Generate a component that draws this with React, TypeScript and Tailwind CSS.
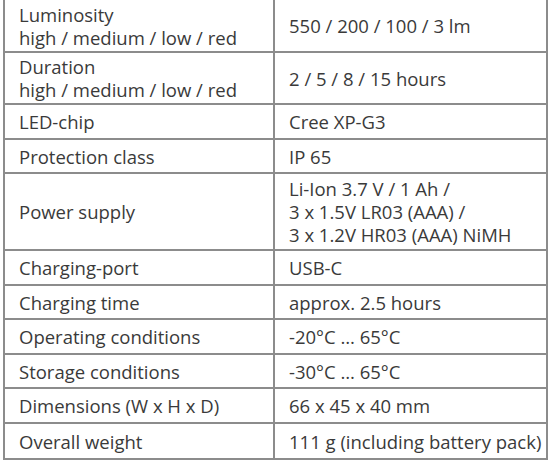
import React from "react";

type Row = { label: string[]; value: string[]; h: string };

const rows: Row[] = [
  { label: ["Luminosity", "high / medium / low / red"], value: ["550 / 200 / 100 / 3 lm"], h: "h-[53px]" },
  { label: ["Duration", "high / medium / low / red"], value: ["2 / 5 / 8 / 15 hours"], h: "h-[52px]" },
  { label: ["LED-chip"], value: ["Cree XP-G3"], h: "h-[35px]" },
  { label: ["Protection class"], value: ["IP 65"], h: "h-[34px]" },
  { label: ["Power supply"], value: ["Li-Ion 3.7 V / 1 Ah /", "3 x 1.5V LR03 (AAA) /", "3 x 1.2V HR03 (AAA) NiMH"], h: "h-[77px]" },
  { label: ["Charging-port"], value: ["USB-C"], h: "h-[35px]" },
  { label: ["Charging time"], value: ["approx. 2.5 hours"], h: "h-[34px]" },
  { label: ["Operating conditions"], value: ["-20°C … 65°C"], h: "h-[35px]" },
  { label: ["Storage conditions"], value: ["-30°C … 65°C"], h: "h-[34px]" },
  { label: ["Dimensions (W x H x D)"], value: ["66 x 45 x 40 mm"], h: "h-[35px]" },
  { label: ["Overall weight"], value: ["111 g (including battery pack)"], h: "h-[34px]" },
];

export default function App() {
  return (
    <div
      className="w-[550px] h-[462px] bg-white overflow-hidden text-[#3a3a3a]"
      style={{ fontFamily: '"Open Sans", "Noto Sans", sans-serif' }}
    >
      <div className="ml-[3px] w-[545px] border-x-2 border-b-2 border-[#8c8c8c]">
        {rows.map((r, i) => (
          <div
            key={i}
            className={`grid grid-cols-[270px_1fr] ${r.h} ${i < rows.length - 1 ? "border-b-2 border-[#8c8c8c]" : ""}`}
          >
            <div className="flex flex-col justify-center pl-[14px] border-r-2 border-[#8c8c8c] text-[18.5px] leading-[23px] whitespace-nowrap">
              {r.label.map((t, j) => (
                <div key={j}>{t}</div>
              ))}
            </div>
            <div className="flex flex-col justify-center pl-[14px] text-[18.5px] leading-[23px] whitespace-nowrap">
              {r.value.map((t, j) => (
                <div key={j}>{t}</div>
              ))}
            </div>
          </div>
        ))}
      </div>
    </div>
  );
}
